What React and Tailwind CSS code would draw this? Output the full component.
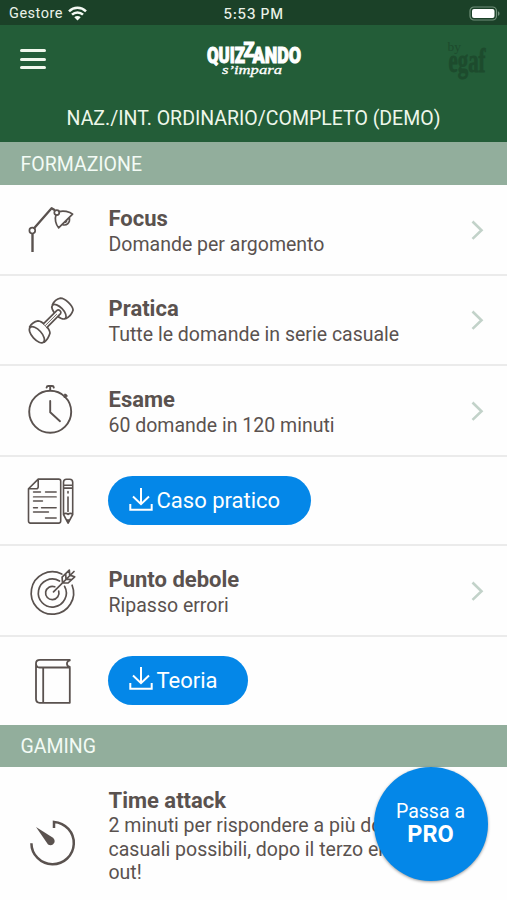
import React from "react";

function Glyph({ box, children, width = 1.7 }) {
  return (
    <svg
      className="w-14 h-[60px] shrink-0"
      viewBox={box}
      fill="none"
      stroke="#5a524f"
      strokeWidth={width}
      strokeLinecap="round"
      strokeLinejoin="round"
    >
      {children}
    </svg>
  );
}

const Lamp = () => (
  <Glyph box="24 200 56 60">
    <path d="M32.5 252V234" strokeWidth="2.4" strokeLinecap="butt" />
    <circle cx="32.3" cy="230.6" r="2.9" />
    <path d="M34.3 228.1 51.6 208.2l2.6 1.6" strokeWidth="2.3" />
    <circle cx="56.8" cy="212.6" r="2.5" />
    <path d="M59 211.600c4.200-1.200 10.500-.2 13.600 2.600L58.600 227.800c-2.800-3.200-4.200-9-2.600-12.600M69.300 217.500c1.200 5.200-2.600 8.800-7.300 7M66.700 220c0 1.600-.8 2.300-2.200 2.400" />
  </Glyph>
);

const Dumbbell = () => (
  <Glyph box="24 290 56 60">
    <path d="M52.400 304.800c1.400-3.200 4.400-5.900 8.100-6.700 4.600 0 12.200 7.400 12.600 12-1 3.600-3.400 6.600-7 8.400" />
    <ellipse cx="59" cy="311.700" rx="9.200" ry="4.300" transform="rotate(46 59 311.700)" />
    <path d="M29.600 327c1.600-3 4.900-5.600 8.400-6.200 4.600.4 11.600 7.600 12 12.200-1 3.700-2.900 7-5.800 9.200" />
    <ellipse cx="36.900" cy="334.700" rx="10" ry="4.700" transform="rotate(48 36.900 334.700)" />
    <path d="M43.600 323.700 57 310.300c1.800-1.400 4.900 1.200 3.600 3.300L47 327.400" fill="#fefefe" />
    <path d="M45.400 325.500 56.600 314.300" strokeWidth=".9" />
  </Glyph>
);

const Stopwatch = () => (
  <Glyph box="24 380 56 60" width={1.9}>
    <circle cx="50.200" cy="410.800" r="21" />
    <path d="M50.200 400v11.300l9.800 8.900" />
    <path d="M50.200 389v-3.300M46.600 386.600c.2-1.400.7-1.600 1.600-1.600h4c1 0 1.500.3 1.600 1.600M64.500 396l1.700-1.800M65 393.600l1.800 1.400" />
  </Glyph>
);

const Papers = () => (
  <Glyph box="24 470.500 56 60" width={1.6}>
    <path d="M38.200 478.600h20.500c1.300 0 2 .8 2 2v40c0 1.200-.7 2-2 2H30.500c-1.300 0-2-.8-2-2v-32.400zM38.200 478.600v7.600c0 1.300-.7 2-2 2h-7.700" />
    <path d="M33.500 491.500h7M45.500 491.500h10.700M33.500 496.400h22.700M33.500 500.500h9M33.500 507.300h4M41.500 507.300h14.700M33.500 511.500h15M45.500 517.500h10.700" strokeWidth="1.400" />
    <path d="M63.500 484v-2.300c0-2 1-3 3-3h3.200c2 0 3 1 3 3V514l-4.600 8.600-4.600-8.600zM63.500 484.800h9.200M63.500 487.600h9.200M63.500 513.800c1.500-1.300 3-1.300 4.600 0 1.600-1.300 3.100-1.300 4.600 0M68 491v1.500M68 496.500V511" />
    <path d="m67 519.500 1.100 2.400 1.100-2.400z" fill="#5a524f" />
  </Glyph>
);

const Target = () => (
  <Glyph box="24 560.500 56 60">
    <path d="M61.800 573.500a21.200 21.200 0 1 0 10.300 11.200" />
    <path d="M59.500 580.500a14 14 0 1 0 5.100 5.300" />
    <path d="M54.800 586.300a6.700 6.700 0 1 0 3.900 4.300" />
    <path d="M53.500 591.300 74 571M62.500 582.300l-.4-5.700 7.200-7 .4 5M62.500 582.300l5.600.2 6.600-6.200-5-1.700M66 578.700l-.3-5M66 578.700l5 .4" />
  </Glyph>
);

const Book = () => (
  <Glyph box="24 650 56 60" width={1.8}>
    <path d="M69.800 659.800H40c-2.800 0-4 1.400-4 3.500v35.500c0 2.700 1.200 4 3.800 4h30V667.500H39.500c-2.400 0-3.500-1.600-3.500-4M69.800 660.500c-3.800 1-3.800 5.300 0 6.300M43.200 667.500v35.300" />
  </Glyph>
);

const Timer = () => (
  <Glyph box="24 812 56 60">
    <path d="M54 828v-6.100A21.200 21.200 0 1 1 31.400 843.200" strokeWidth="2.5" strokeLinecap="butt" strokeLinejoin="miter" />
    <path d="m36 827 17 10.800c4.200 3.800-.5 9.500-5 6.600z" fill="#5a524f" stroke="none" />
  </Glyph>
);

function Chevron() {
  return (
    <svg className="w-4 h-6 shrink-0" viewBox="0 0 16 24" fill="none" stroke="#c2d2c9" strokeWidth="2.6">
      <path d="m2.500 3.500 9 8.700-9 8.700" />
    </svg>
  );
}

function Row({ icon, title, text, height }) {
  return (
    <div className={`flex items-center pl-6 pr-[21px] border-b-2 border-[#ebebeb] ${height}`}>
      {icon}
      <div className="ml-[28.5px] flex-1 pt-[3px]">
        <div className="text-[22px] leading-[26px] font-bold">{title}</div>
        <div className="text-[19.5px] leading-[25px]">{text}</div>
      </div>
      <Chevron />
    </div>
  );
}

function DownloadRow({ icon, label, size, height }) {
  return (
    <div className={`flex items-center pl-6 ${height}`}>
      {icon}
      <button className={`ml-7 h-[49px] rounded-full bg-[#0487e8] text-white flex items-center pl-[21px] ${size}`}>
        <svg className="w-6 h-6 shrink-0 mb-[2px]" viewBox="0 0 24 24" fill="none" stroke="white" strokeWidth="2">
          <path d="M12 0v16M4 8.500l8 7.700 8-7.700M1.300 16v5.800h21.400V16" />
        </svg>
        <span className="ml-[3.5px] pt-px text-[22px] leading-none whitespace-nowrap">{label}</span>
      </button>
    </div>
  );
}

function Section({ label, height }) {
  return (
    <h2 className={`bg-[#92ae9c] text-[#f3fbf5] text-[19.5px] flex items-center pl-[20.5px] pt-[2px] ${height}`}>{label}</h2>
  );
}

export default function App() {
  return (
    <div className="relative w-[507px] h-[900px] overflow-hidden bg-[#fefefe] text-[#5a524f] font-['Roboto',sans-serif]">
      <div className="h-[25px] bg-[#1b4128] text-[#eaf2e8] flex items-center justify-between pl-[9px] pr-[7px] text-[14.5px]">
        <div className="flex items-center gap-[5px] w-[160px] pt-[2px] tracking-[0.5px]">
          <span>Gestore</span>
          <svg className="w-[19px] h-[15px]" viewBox="0 0 19 15" fill="none" stroke="#f4faf4" strokeWidth="2.5">
            <path d="M1 5.300a12.200 12.200 0 0 1 17 0M4 8.700a7.900 7.900 0 0 1 11 0" />
            <path d="M6.300 11.300a4.600 4.600 0 0 1 6.400 0l-3.200 3.200z" fill="#f4faf4" stroke="none" />
          </svg>
        </div>
        <span className="font-medium pt-[2px] font-['Inter',sans-serif] text-[14px] tracking-[0.6px]">5:53 PM</span>
        <div className="w-[162px] flex justify-end pt-px">
          <svg className="w-[31px] h-[15px]" viewBox="0 0 31 15">
            <rect x="1" y="1" width="26.5" height="13" rx="4" fill="none" stroke="#71907a" strokeWidth="1.2" />
            <rect x="3" y="3" width="22.5" height="9" rx="2" fill="white" />
            <path d="M29 5.200c2 .8 2 3.800 0 4.600z" fill="#71907a" />
          </svg>
        </div>
      </div>

      <header className="h-[117px] bg-[#235d38]">
        <div className="h-[67px] flex items-center justify-between pl-5 pr-[16px]">
          <div className="w-[57px] flex flex-col gap-[5.5px] pt-[1px]">
            <div className="w-[26px] h-[3px] rounded-full bg-[#f1f8ed]" />
            <div className="w-[26px] h-[3px] rounded-full bg-[#f1f8ed]" />
            <div className="w-[26px] h-[3px] rounded-full bg-[#f1f8ed]" />
          </div>
          <svg className="w-[110px] h-[50px] overflow-visible" viewBox="199 34 110 50" fill="white">
            <g fontFamily="Roboto" fontWeight="900" fontSize="22" stroke="white" strokeWidth="1">
              <text x="207" y="62.800" textLength="38" lengthAdjust="spacingAndGlyphs">QUIZ</text>
              <text x="243.500" y="56.500" fontSize="20" textLength="11" lengthAdjust="spacingAndGlyphs">Z</text>
              <text x="252.500" y="62.800" textLength="48.500" lengthAdjust="spacingAndGlyphs">ANDO</text>
            </g>
            <text x="222" y="73.500" fontFamily="Liberation Serif" fontStyle="italic" fontSize="13" stroke="white" strokeWidth=".3" textLength="60" lengthAdjust="spacingAndGlyphs">s’impara</text>
          </svg>
          <svg className="w-[48px] h-[50px] ml-3 overflow-visible" viewBox="443 34 48 50" fill="#1d4b2d">
            <text x="447.500" y="50.500" fontFamily="Liberation Serif" fontSize="13.5">by</text>
            <text x="448.500" y="71.500" fontFamily="Liberation Serif" fontWeight="bold" fontSize="34" stroke="#1d4b2d" strokeWidth=".8" textLength="37" lengthAdjust="spacingAndGlyphs">egaf</text>
          </svg>
        </div>
        <h1 className="h-[50px] pt-[3px] flex items-center justify-center text-[19.5px] text-[#eef7ea] whitespace-nowrap">
          NAZ./INT. ORDINARIO/COMPLETO (DEMO)
        </h1>
      </header>

      <Section label="FORMAZIONE" height="h-[43px]" />
      <Row icon={<Lamp />} title="Focus" text="Domande per argomento" height="h-[91px]" />
      <Row icon={<Dumbbell />} title="Pratica" text="Tutte le domande in serie casuale" height="h-[90px]" />
      <Row icon={<Stopwatch />} title="Esame" text="60 domande in 120 minuti" height="h-[91px]" />
      <DownloadRow icon={<Papers />} label="Caso pratico" size="w-[203px]" height="h-[89px] border-b-2 border-[#ebebeb]" />
      <Row icon={<Target />} title="Punto debole" text="Ripasso errori" height="h-[91px]" />
      <DownloadRow icon={<Book />} label="Teoria" size="w-[140px]" height="h-[88px] pb-[2px]" />
      <Section label="GAMING" height="h-[42px]" />
      <div className="flex pl-6 pt-[21px]">
        <div className="pt-6"><Timer /></div>
        <div className="ml-[28.5px] whitespace-nowrap">
          <div className="text-[22px] leading-[26px] font-bold">Time attack</div>
          <p className="text-[19.5px] leading-[23.5px]">
            2 minuti per rispondere a più domande<br />
            casuali possibili, dopo il terzo errore<br />
            out!
          </p>
        </div>
      </div>

      <button className="absolute left-[374px] top-[767px] size-[114px] rounded-full bg-[#0487e8] text-white shadow-[0_1px_3px_rgba(0,0,0,0.4)] flex flex-col items-center justify-center pb-[2px] pr-px">
        <span className="text-[19.5px] leading-[23px]">Passa a</span>
        <span className="text-[23.5px] leading-[23px] font-bold">PRO</span>
      </button>
    </div>
  );
}
